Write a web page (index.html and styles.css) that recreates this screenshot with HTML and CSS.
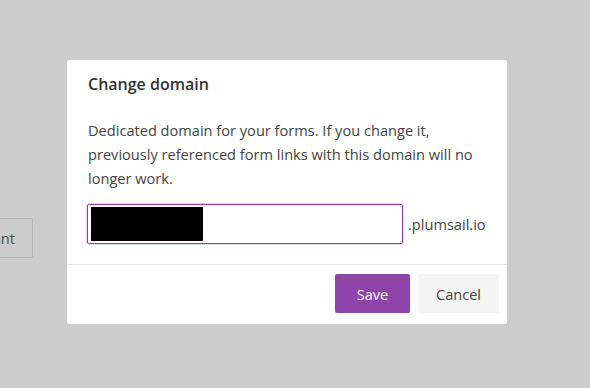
FILE: index.html
```html
<!DOCTYPE html>
<html lang="en">
<head>
  <meta charset="UTF-8">
  <title>Change domain</title>
  <link rel="stylesheet" href="styles.css">
</head>
<body>
  <div class="page">
    <!-- page content behind the overlay -->
    <button class="back-button">Account</button>

    <div class="dialog">
      <div class="dialog-header">Change domain</div>
      <div class="dialog-body">
        <p class="dialog-text">Dedicated domain for your forms. If you change it, previously referenced form links with this domain will no longer work.</p>
        <div class="domain-row">
          <div class="domain-input"><span class="redacted"></span></div>
          <span class="domain-suffix">.plumsail.io</span>
        </div>
      </div>
      <div class="dialog-footer">
        <button class="btn btn-primary">Save</button>
        <button class="btn btn-default">Cancel</button>
      </div>
    </div>
  </div>
</body>
</html>
```

FILE: styles.css
```css
/* Basic reset */
html, body {
  margin: 0;
  padding: 0;
  height: 100%;
  overflow: hidden;
  background: #cccccc;
  font-family: "Open Sans", "Noto Sans", sans-serif;
}
.page {
  display: flex;
  align-items: flex-start;
  padding-top: 60px;
}
/* Button of the page under the modal overlay */
.back-button {
  margin: 158px 0 0 -67px;
  width: 100px;
  height: 40px;
  padding: 0 17px 0 0;
  text-align: right;
  background: #cccccc;
  border: 1px solid #b5b5b5;
  border-radius: 2px;
  font-family: inherit;
  font-size: 14.6px;
  color: #4c4c4c;
}
/* Modal dialog */
.dialog {
  margin-left: 34px;
  width: 440px;
  background: #fff;
  border-radius: 2px;
}
.dialog-header {
  padding: 12px 21px 0;
  line-height: 24px;
  font-size: 16px;
  font-weight: 600;
  color: #333;
}
.dialog-body {
  padding: 22px 20px 20px 21px;
  border-bottom: 1px solid #e3e3e3;
}
.dialog-text {
  margin: 0;
  font-size: 14.6px;
  line-height: 24px;
  color: #444;
}
.domain-row {
  display: flex;
  align-items: center;
  gap: 5px;
  margin-top: 14px;
}
.domain-input {
  width: 308px;
  height: 32px;
  padding: 3px;
  border: 1px solid #8e44ad;
  border-radius: 2px;
  box-shadow: 0 0 0 1px #e6d3ee;
  margin-left: -1px;
}
.redacted {
  display: block;
  width: 112px;
  height: 34px;
  margin: -1px 0 0 0;
  background: #000;
}
.domain-suffix {
  font-size: 14.6px;
  color: #444;
}
/* Footer buttons */
.dialog-footer {
  display: flex;
  justify-content: flex-end;
  gap: 8px;
  padding: 9px 8px 11px;
}
.btn {
  height: 39px;
  border: none;
  border-radius: 2px;
  font-family: inherit;
  font-size: 14.6px;
  cursor: pointer;
}
.btn-primary {
  width: 75px;
  background: #8e44a8;
  color: #fff;
}
.btn-default {
  width: 81px;
  background: #f4f4f4;
  color: #444;
}
```
